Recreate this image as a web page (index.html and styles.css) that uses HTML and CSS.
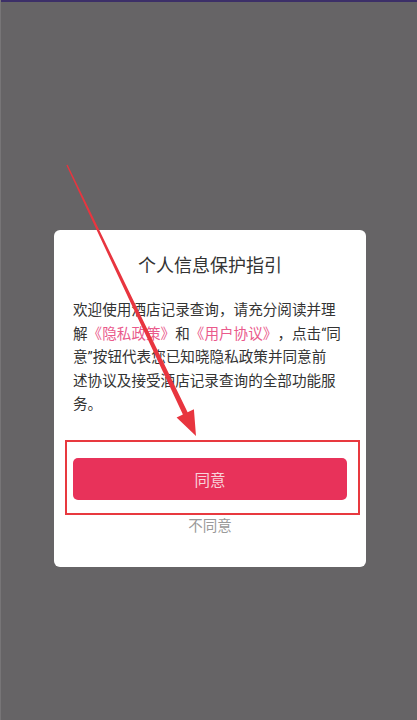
FILE: index.html
```html
<!DOCTYPE html>
<html lang="zh-CN">
<head>
<meta charset="utf-8">
<title>个人信息保护指引</title>
<link rel="stylesheet" href="styles.css">
</head>
<body>
<div class="topbar"></div>
<div class="screen">
  <div class="dialog">
    <div class="title">个人信息保护指引</div>
    <p class="content">欢迎使用酒店记录查询，请充分阅读并理<br>解<span class="link">《隐私政策》</span>和<span class="link">《用户协议》</span>，点击“同<br>意”按钮代表您已知晓隐私政策并同意前<br>述协议及接受酒店记录查询的全部功能服<br>务。</p>
    <div class="actions">
      <button class="agree">同意</button>
      <div class="disagree">不同意</div>
    </div>
  </div>
</div>
<div class="mark-box"></div>
<svg class="arrow" width="417" height="720" viewBox="0 0 417 720">
  <polygon points="65.4,165.3 181.9,414.5 175.6,417.6 195,436 192.9,409.3 186.6,412.3 66.6,164.7" fill="#e8353f"/>
</svg>
</body>
</html>
```
FILE: styles.css
```css
html, body {
  margin: 0;
  padding: 0;
}
body {
  width: 417px;
  height: 720px;
  background: #666466;
  font-family: "Roboto", "Noto Sans CJK SC", sans-serif;
  position: relative;
  overflow: hidden;
  border-left: 1px solid #777577;
  box-sizing: border-box;
}
.topbar {
  height: 2px;
  background: #3c2f68;
}
.screen {
  padding-top: 228px;
  padding-left: 53px;
}
.dialog {
  width: 312px;
  background: #ffffff;
  border-radius: 6px;
  padding: 24px 0 30px;
  box-sizing: border-box;
}
.title {
  text-align: center;
  font-size: 18px;
  line-height: 24px;
  color: #333333;
}
.content {
  margin: 21px 0 0;
  padding: 0 19px;
  font-size: 14.6px;
  line-height: 23.5px;
  color: #333333;
  white-space: nowrap;
  text-spacing-trim: space-all;
}
.link {
  color: #ea5a8c;
}
.actions {
  margin-top: 41px;
  padding: 0 19px;
  display: flex;
  flex-direction: column;
  align-items: stretch;
}
.agree {
  height: 42px;
  border: none;
  border-radius: 5px;
  background: #e8325a;
  color: #f8d3db;
  font-family: inherit;
  font-size: 15.5px;
  padding: 0;
}
.disagree {
  margin-top: 17px;
  text-align: center;
  font-size: 14.5px;
  line-height: 20px;
  color: #9a9a9a;
}
.mark-box {
  position: absolute;
  left: 64px;
  top: 440px;
  width: 295px;
  height: 75px;
  border: 2px solid #e8393f;
  box-sizing: border-box;
}
.arrow {
  position: absolute;
  left: 0;
  top: 0;
  pointer-events: none;
}
```
